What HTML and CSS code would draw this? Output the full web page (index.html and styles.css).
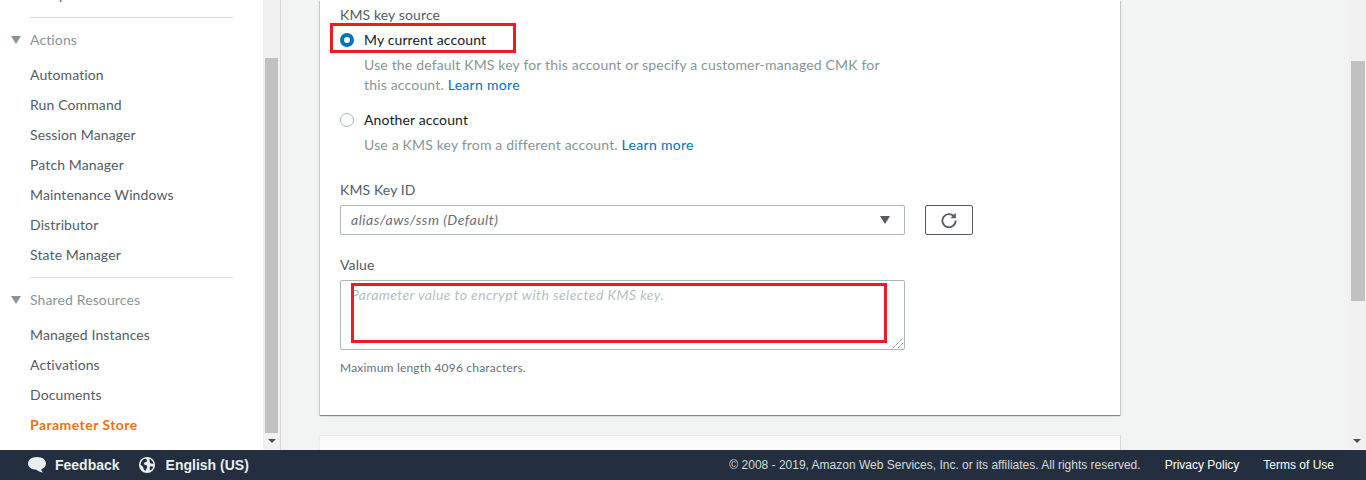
FILE: index.html
```html
<!DOCTYPE html>
<html lang="en">
<head>
    <meta charset="UTF-8">
    <title>Create parameter</title>
    <link rel="stylesheet" href="styles.css">
</head>
<body>
    <div class="page">
        <aside class="sidebar">
            <nav class="nav">
                <a class="nav-item">Compliance</a>
                <div class="nav-section">
                    <div class="nav-head"><span class="caret"></span>Actions</div>
                    <a class="nav-item">Automation</a>
                    <a class="nav-item">Run Command</a>
                    <a class="nav-item">Session Manager</a>
                    <a class="nav-item">Patch Manager</a>
                    <a class="nav-item">Maintenance Windows</a>
                    <a class="nav-item">Distributor</a>
                    <a class="nav-item">State Manager</a>
                </div>
                <div class="nav-section">
                    <div class="nav-head"><span class="caret"></span>Shared Resources</div>
                    <a class="nav-item">Managed Instances</a>
                    <a class="nav-item">Activations</a>
                    <a class="nav-item">Documents</a>
                    <a class="nav-item active">Parameter Store</a>
                </div>
            </nav>
        </aside>
        <div class="scrollbar nav-scroll">
            <div class="thumb"></div>
            <span class="arrow-down"></span>
        </div>
        <main class="content">
            <section class="card">
                <div class="field-label first">KMS key source</div>
                <div class="radio-row">
                    <span class="radio checked"></span>
                    <span class="radio-text">My current account</span>
                </div>
                <p class="radio-desc">Use the default KMS key for this account or specify a customer-managed CMK for this account. <a class="link">Learn more</a></p>
                <div class="radio-row second">
                    <span class="radio"></span>
                    <span class="radio-text">Another account</span>
                </div>
                <p class="radio-desc">Use a KMS key from a different account. <a class="link">Learn more</a></p>

                <div class="field-label key-id">KMS Key ID</div>
                <div class="select-row">
                    <div class="select">
                        <span class="select-value">alias/aws/ssm (Default)</span>
                        <span class="select-caret"></span>
                    </div>
                    <button class="refresh">
                        <svg width="18" height="18" viewBox="0 0 18 18" fill="none">
                            <path d="M14.6 6.2A6.6 6.6 0 1 0 15.6 9.6" stroke="#545b64" stroke-width="1.8"/>
                            <path d="M15.8 1.8V7.2H10.4Z" fill="#545b64"/>
                        </svg>
                    </button>
                </div>

                <div class="field-label value">Value</div>
                <div class="textarea">
                    <span class="placeholder">Parameter value to encrypt with selected KMS key.</span>
                    <svg class="grip" width="10" height="10" viewBox="0 0 10 10">
                        <path d="M0 10L10 0M5 10L10 5" stroke="#555" stroke-width="1" stroke-dasharray="1 1"/>
                    </svg>
                </div>
                <div class="hint">Maximum length 4096 characters.</div>

                <div class="mark mark-radio"></div>
                <div class="mark mark-value"></div>
            </section>
            <section class="card-next"></section>
        </main>
        <div class="scrollbar page-scroll">
            <div class="thumb"></div>
            <span class="arrow-down"></span>
        </div>
    </div>
    <footer class="footer">
        <a class="foot-link feedback">
            <svg width="20" height="18" viewBox="0 0 20 18">
                <path d="M10 1C4.8 1 1 3.8 1 7.6C1 11.2 4.6 13.8 9.4 13.8C11 15.2 13.4 16.4 16.2 16.6C15 15.6 14.4 14.4 14.2 13.2C17.2 12.2 19 10.2 19 7.6C19 3.8 15.2 1 10 1Z" fill="#eaeded"/>
            </svg>
            Feedback
        </a>
        <a class="foot-link lang">
            <svg width="16" height="16" viewBox="0 0 16 16">
                <circle cx="8" cy="8" r="8" fill="#eaeded"/>
                <path d="M6 1.6C7.6 2.4 8.4 3 8 4.2C7.4 5.2 5.6 5 5 6.2C4.6 7.2 5.6 7.8 6.8 8C8 8.2 8.4 9.4 8 10.8C7.6 12 6.8 12.6 6.6 14C5 13 4.4 11.6 4 10C3.4 8.8 2.2 8.4 1.6 7.4C1.8 4.8 3.6 2.4 6 1.6ZM10.4 1.8C12.4 2.6 14 4.4 14.4 6.8C13 7 11.6 6.6 11 5.4C10.4 4.2 10.8 3 10.4 1.8ZM11.4 9.2C12.4 9 13.6 9.2 14.2 9.8C13.8 11.4 12.8 12.8 11.4 13.6C10.6 12.2 10.2 10.2 11.4 9.2Z" fill="#232f3e"/>
            </svg>
            English (US)
        </a>
        <span class="copyright">© 2008 - 2019, Amazon Web Services, Inc. or its affiliates. All rights reserved.</span>
        <a class="legal">Privacy Policy</a>
        <a class="legal">Terms of Use</a>
    </footer>
</body>
</html>
```

FILE: styles.css
```css
* {
    box-sizing: border-box;
}
html, body {
    margin: 0;
    height: 100%;
    overflow: hidden;
}
body {
    font-family: Lato, "Open Sans", sans-serif;
    font-size: 14px;
    letter-spacing: 0.12px;
    color: #16191f;
    display: flex;
    flex-direction: column;
}
.page {
    flex: 1;
    display: flex;
    min-height: 0;
    background: #f2f3f3;
}

/* side navigation */
.sidebar {
    width: 263px;
    background: #fff;
    overflow: hidden;
}
.nav {
    margin-top: -20px;
    padding-left: 30px;
    width: 233px;
}
.nav-item {
    display: block;
    height: 30px;
    line-height: 30px;
    color: #545b64;
}
.nav-item.active {
    color: #ec7211;
    font-weight: bold;
    letter-spacing: 0.45px;
}
.nav-section {
    margin-top: 7px;
    border-top: 1px solid #d5dbdb;
}
.nav-head {
    position: relative;
    margin-top: 7px;
    margin-bottom: 5px;
    height: 30px;
    line-height: 30px;
    color: #879596;
}
.caret {
    position: absolute;
    left: -19px;
    top: 11px;
    border-left: 5px solid transparent;
    border-right: 5px solid transparent;
    border-top: 8px solid #879596;
}

/* fake scrollbars, the window does not really scroll */
.scrollbar {
    position: relative;
    width: 17px;
    background: #f1f1f1;
}
.nav-scroll {
    width: 18px;
    border-right: 1px solid #d5dbdb;
}
.thumb {
    position: absolute;
    left: 2px;
    background: #c1c1c1;
}
.nav-scroll .thumb {
    top: 58px;
    width: 13px;
    height: 375px;
}
.page-scroll .thumb {
    width: 14px;
    top: 61px;
    height: 240px;
}
.arrow-down {
    position: absolute;
    bottom: 7px;
    left: 4px;
    border-left: 4px solid transparent;
    border-right: 4px solid transparent;
    border-top: 4px solid #505050;
}
.nav-scroll .arrow-down {
    left: 5px;
}

/* main column */
.content {
    flex: 1;
    padding: 0 229px 0 39px;
    min-width: 0;
}
.card {
    position: relative;
    height: 415px;
    padding: 5px 20px 0;
    background: #fff;
    box-shadow: 0 1px 1px 0 rgba(0, 28, 36, 0.3), 1px 1px 1px 0 rgba(0, 28, 36, 0.15), -1px 1px 1px 0 rgba(0, 28, 36, 0.15);
}
.card-next {
    margin: 20px -1px 0;
    height: 30px;
    background: #fafafa;
    border-top: 1px solid #eaeded;
    border-right: 1px solid #d5dbdb;
    border-left: 1px solid #eaeded;
}
.field-label {
    height: 20px;
    line-height: 20px;
    color: #545b64;
}
.key-id {
    margin-top: 25px;
}
.value {
    margin-top: 20px;
}
.radio-row {
    display: flex;
    align-items: center;
    height: 20px;
    margin-top: 5px;
}
.radio-row.second {
    margin-top: 15px;
}
.radio {
    width: 14px;
    height: 14px;
    margin-right: 10px;
    border: 1px solid #aab7b8;
    border-radius: 50%;
    background: #fff;
}
.radio.checked {
    border: 4px solid #0073bb;
}
.radio-text {
    margin-top: -2px;
}
.radio-desc {
    width: 525px;
    margin: 5px 0 0 24px;
    line-height: 20px;
    letter-spacing: 0.17px;
    color: #879596;
}
.link {
    letter-spacing: 0.3px;
    color: #0073bb;
}
.select-row {
    display: flex;
    gap: 20px;
    margin-top: 5px;
}
.select {
    display: flex;
    align-items: center;
    justify-content: space-between;
    width: 565px;
    height: 30px;
    padding: 0 14px 2px 10px;
    border: 1px solid #aab7b8;
    border-radius: 2px;
}
.select-value {
    font-style: italic;
    letter-spacing: 0.5px;
    color: #687078;
}
.select-caret {
    margin-top: 2px;
    border-left: 5px solid transparent;
    border-right: 5px solid transparent;
    border-top: 8px solid #545b64;
}
.refresh {
    display: flex;
    align-items: center;
    justify-content: center;
    width: 48px;
    height: 30px;
    padding: 0;
    border: 1px solid #545b64;
    border-radius: 2px;
    background: #fff;
}
.textarea {
    position: relative;
    width: 565px;
    height: 70px;
    margin-top: 5px;
    padding: 4px 10px;
    border: 1px solid #aab7b8;
    border-radius: 2px;
    line-height: 20px;
}
.placeholder {
    font-style: italic;
    letter-spacing: 0.42px;
    color: #b4bfc0;
}
.grip {
    position: absolute;
    right: 1px;
    bottom: 1px;
}
.hint {
    margin-top: 8px;
    line-height: 20px;
    font-size: 12px;
    letter-spacing: 0.2px;
    color: #687078;
}

/* red annotation boxes drawn on the screenshot */
.mark {
    position: absolute;
    border: 3px solid #ed1c24;
}
.mark-radio {
    left: 10px;
    top: 23px;
    width: 186px;
    height: 30px;
}
.mark-value {
    left: 31px;
    top: 283px;
    width: 536px;
    height: 60px;
}

/* footer */
.footer {
    flex: none;
    display: flex;
    align-items: center;
    height: 30px;
    padding: 0 32px 0 27px;
    background: #232f3e;
    color: #eaeded;
    font-family: "Liberation Sans", Arial, sans-serif;
    font-size: 12px;
    letter-spacing: 0;
}
.foot-link {
    display: flex;
    align-items: center;
    font-size: 14px;
    font-weight: bold;
}
.feedback svg {
    margin-right: 8px;
}
.lang {
    margin-left: 19px;
}
.lang svg {
    margin-right: 11px;
}
.copyright {
    margin-left: auto;
    color: #d5dbdb;
}
.legal {
    margin-left: 24px;
    color: #fff;
}
```
